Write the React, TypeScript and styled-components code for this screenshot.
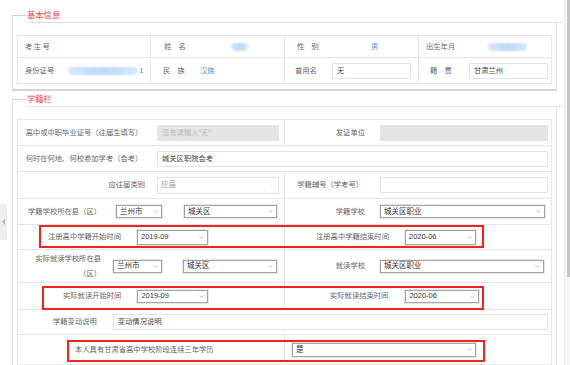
import React from 'react';
import styled, { createGlobalStyle } from 'styled-components';
import { ChevronDown } from 'lucide-react';

const GlobalStyle = createGlobalStyle`
  html, body { margin: 0; padding: 0; background: #fff; }
  body {
    font-family: "Liberation Sans", "Noto Sans CJK SC", sans-serif;
    font-size: 7.3px;
    color: #666;
  }
`;

const Page = styled.div`
  display: flex;
  width: 570px;
  height: 365px;
  overflow: hidden;
  background: #fff;
`;

const Rail = styled.div`
  width: 8px;
  flex: none;
  padding-top: 204px;
  box-sizing: border-box;
`;

const RailTab = styled.div`
  width: 7px;
  height: 36px;
  background: #efefef;
  display: flex;
  align-items: center;
  justify-content: center;
  &::before {
    content: '';
    border-right: 3px solid #b8b8b8;
    border-top: 3px solid transparent;
    border-bottom: 3px solid transparent;
  }
`;

const Main = styled.div`
  flex: 1;
  padding: 15px 0 0 4px;
  box-sizing: border-box;
  overflow: hidden;
`;

const ScrollTrack = styled.div`
  width: 6px;
  flex: none;
  background: #f7f7f7;
  border-left: 1px solid #ececec;
  box-sizing: border-box;
  display: flex;
  justify-content: flex-end;
`;

const ScrollThumb = styled.div`
  width: 3px;
  height: 277px;
  background: #c4c4c4;
`;

const Section = styled.div<{ $top?: number }>`
  margin: ${(p) => p.$top || 0}px 7px 0 0;
  border-left: 1px solid #dcdcdc;
`;

const Head = styled.div`
  display: flex;
  height: 8px;
`;

const Tick = styled.div`
  width: 13px;
  flex: none;
  border-top: 1px solid #cfcfcf;
`;

const LegendBar = styled.div`
  flex: 1;
  margin: 0 -6px 0 1px;
  border-bottom: 1px solid #e3e3e3;
`;

const Legend = styled.div`
  margin-top: -5px;
  font-size: 8.3px;
  line-height: 10px;
  color: #f2454a;
`;

const Body = styled.div`
  border-right: 1px solid #e6e6e6;
  border-bottom: 2px solid #d4d4d4;
  padding: 12px 4px 5px 4px;
`;

const OpenBody = styled.div`
  border-right: 1px solid #e6e6e6;
  padding: 12px 4px 0 4px;
`;

const Table = styled.div`
  border: 1px solid #e6e6e6;
  border-bottom: none;
`;

const Row = styled.div<{ $h: number; $cols?: string }>`
  position: relative;
  display: grid;
  grid-template-columns: ${(p) => p.$cols || '1fr'};
  height: ${(p) => p.$h}px;
  box-sizing: border-box;
  border-bottom: 1px solid #e6e6e6;
`;

const Cell = styled.div<{ $pad?: number; $last?: boolean }>`
  display: flex;
  align-items: center;
  padding-left: ${(p) => p.$pad || 0}px;
  border-right: ${(p) => (p.$last ? 'none' : '1px solid #e6e6e6')};
  white-space: nowrap;
  min-width: 0;
`;

const Label = styled.span<{ $w?: number; $align?: string; $pr?: number }>`
  flex: none;
  width: ${(p) => (p.$w ? `${p.$w}px` : 'auto')};
  text-align: ${(p) => p.$align || 'left'};
  padding-right: ${(p) => p.$pr || 0}px;
  box-sizing: border-box;
  color: #666;
  line-height: 10px;
`;

const WrapLabel = styled(Label)`
  white-space: normal;
  line-height: 15px;
`;

const Value = styled.span<{ $ml?: number }>`
  margin-left: ${(p) => p.$ml || 0}px;
  color: #4a95e8;
  line-height: 10px;
`;

const Blur = styled.span<{ $ml?: number; $w: number }>`
  display: inline-block;
  margin-left: ${(p) => p.$ml || 0}px;
  width: ${(p) => p.$w}px;
  height: 8px;
  border-radius: 4px;
  background: linear-gradient(90deg, #d6e7fb, #bcd8f8 50%, #d6e7fb);
  filter: blur(1.2px);
`;

const Field = styled.div<{ $ml?: number; $w: number; $h?: number; $off?: boolean }>`
  flex: none;
  margin-left: ${(p) => p.$ml || 0}px;
  width: ${(p) => p.$w}px;
  height: ${(p) => p.$h || 16}px;
  box-sizing: border-box;
  border: 1px solid ${(p) => (p.$off ? '#e4e4e4' : '#e3e3e3')};
  background: ${(p) => (p.$off ? '#e4e4e4' : '#fff')};
  color: ${(p) => (p.$off ? '#bdbdbd' : '#444')};
  display: flex;
  align-items: center;
  padding-left: 4px;
  line-height: 10px;
`;

const Select = styled.div<{ $ml?: number; $w: number; $h?: number; $off?: boolean }>`
  flex: none;
  margin-left: ${(p) => p.$ml || 0}px;
  width: ${(p) => p.$w}px;
  height: ${(p) => p.$h || 14}px;
  box-sizing: border-box;
  border: 1px solid ${(p) => (p.$off ? '#e2e2e2' : '#a3a3a3')};
  box-shadow: 0 0 0 1px ${(p) => (p.$off ? 'transparent' : '#e8e8e8')};
  background: #fff;
  color: ${(p) => (p.$off ? '#a0a0a0' : '#333')};
  display: flex;
  align-items: center;
  justify-content: space-between;
  padding: 0 2px 0 3px;
  font-size: 7.5px;
  line-height: 10px;
  svg {
    flex: none;
    color: ${(p) => (p.$off ? '#c8c8c8' : '#808080')};
  }
`;

const RedBox = styled.div<{ $l: number; $t: number; $w: number; $h: number }>`
  position: absolute;
  left: ${(p) => p.$l}px;
  top: ${(p) => p.$t}px;
  width: ${(p) => p.$w}px;
  height: ${(p) => p.$h}px;
  box-sizing: border-box;
  border: 2px solid #f2231e;
  pointer-events: none;
`;

const Drop = ({ text, ml, w, h, off }: { text: string; ml?: number; w: number; h?: number; off?: boolean }) => (
  <Select $ml={ml} $w={w} $h={h} $off={off}>
    <span>{text}</span>
    <ChevronDown size={7} strokeWidth={1.5} />
  </Select>
);

const TOP_COLS = '133px 134px 134px 1fr';
const HALF = '267px 1fr';

export default function App() {
  return (
    <>
      <GlobalStyle />
      <Page>
        <Rail>
          <RailTab />
        </Rail>
        <Main>
          <Section>
            <Head>
              <Tick />
              <LegendBar>
                <Legend>基本信息</Legend>
              </LegendBar>
            </Head>
            <Body>
              <Table>
                <Row $h={22} $cols={TOP_COLS}>
                  <Cell $pad={7}>
                    <Label style={{ letterSpacing: '1.4px' }}>考生号</Label>
                  </Cell>
                  <Cell $pad={13}>
                    <Label>姓　名</Label>
                    <Blur $ml={45} $w={17} />
                  </Cell>
                  <Cell $pad={12}>
                    <Label>性　别</Label>
                    <Value $ml={52}>男</Value>
                  </Cell>
                  <Cell $pad={7} $last>
                    <Label>出生年月</Label>
                    <Blur $ml={33} $w={39} />
                  </Cell>
                </Row>
                <Row $h={26} $cols={TOP_COLS}>
                  <Cell $pad={7}>
                    <Label>身份证号</Label>
                    <Blur $ml={14} $w={70} />
                    <Value $ml={1}>1</Value>
                  </Cell>
                  <Cell $pad={12}>
                    <Label>民　族</Label>
                    <Value $ml={15}>汉族</Value>
                  </Cell>
                  <Cell $pad={10}>
                    <Label>曾用名</Label>
                    <Field $ml={15} $w={79}>无</Field>
                  </Cell>
                  <Cell $pad={11} $last>
                    <Label>籍　贯</Label>
                    <Field $ml={17} $w={79}>甘肃兰州</Field>
                  </Cell>
                </Row>
              </Table>
            </Body>
          </Section>

          <Section $top={8}>
            <Head>
              <Tick />
              <LegendBar>
                <Legend>学籍栏</Legend>
              </LegendBar>
            </Head>
            <OpenBody>
              <Table>
                <Row $h={26} $cols={HALF}>
                  <Cell>
                    <Label $w={132} $align="center">高中或中职毕业证号（往届生填写）</Label>
                    <Field $ml={7} $w={122} $off>没有请输入"无"</Field>
                  </Cell>
                  <Cell $last>
                    <Label $w={90} $align="right" $pr={10}>发证单位</Label>
                    <Field $ml={5} $w={168} $off />
                  </Cell>
                </Row>
                <Row $h={26}>
                  <Cell $last>
                    <Label $w={132} $align="center">何时在何地、何校参加学考（会考）</Label>
                    <Field $ml={7} $w={391}>城关区职院会考</Field>
                  </Cell>
                </Row>
                <Row $h={27} $cols={HALF}>
                  <Cell>
                    <Label $w={132} $align="right" $pr={5}>应往届类别</Label>
                    <Drop ml={7} w={122} h={17} text="应届" off />
                  </Cell>
                  <Cell $last>
                    <Label $w={90} $align="right" $pr={12}>学籍辅号（学考号）</Label>
                    <Field $ml={5} $w={168}></Field>
                  </Cell>
                </Row>
                <Row $h={26} $cols={HALF}>
                  <Cell>
                    <Label $w={93} $align="center">学籍学校所在县（区）</Label>
                    <Drop ml={5} w={46} h={13} text="兰州市" />
                    <Drop ml={22} w={93} h={13} text="城关区" />
                  </Cell>
                  <Cell $last>
                    <Label $w={90} $align="right" $pr={10}>学籍学校</Label>
                    <Drop ml={5} w={165} h={13} text="城关区职业" />
                  </Cell>
                </Row>
                <Row $h={25} $cols={HALF}>
                  <Cell $pad={30}>
                    <Label>注册高中学籍开始时间</Label>
                    <Drop ml={16} w={71} h={15} text="2019-09" />
                  </Cell>
                  <Cell $pad={31} $last>
                    <Label>注册高中学籍结束时间</Label>
                    <Drop ml={16} w={71} h={15} text="2020-06" />
                  </Cell>
                  <RedBox $l={21} $t={0} $w={445} $h={23} />
                </Row>
                <Row $h={33} $cols={HALF}>
                  <Cell $pad={12}>
                    <WrapLabel $w={71} $align="right">实际就读学校所在县（区）</WrapLabel>
                    <Drop ml={12} w={49} h={13} text="兰州市" />
                    <Drop ml={21} w={94} h={13} text="城关区" />
                  </Cell>
                  <Cell $last>
                    <Label $w={90} $align="right" $pr={10}>就读学校</Label>
                    <Drop ml={5} w={164} h={13} text="城关区职业" />
                  </Cell>
                </Row>
                <Row $h={27} $cols={HALF}>
                  <Cell $pad={45}>
                    <Label>实际就读开始时间</Label>
                    <Drop ml={16} w={71} h={13} text="2019-09" />
                  </Cell>
                  <Cell $pad={45} $last>
                    <Label>实际就读结束时间</Label>
                    <Drop ml={17} w={74} h={13} text="2020-06" />
                  </Cell>
                  <RedBox $l={24} $t={3} $w={442} $h={24} />
                </Row>
                <Row $h={25}>
                  <Cell $pad={35} $last>
                    <Label>学籍变动说明</Label>
                    <Field $ml={16} $w={435}>变动情况说明</Field>
                  </Cell>
                </Row>
                <Row $h={30} $cols={HALF}>
                  <Cell $pad={57}>
                    <Label>本人具有甘肃省高中学校阶段连续三年学历</Label>
                  </Cell>
                  <Cell $pad={7} $last>
                    <Drop w={184} h={14} text="是" />
                  </Cell>
                  <RedBox $l={49} $t={5} $w={418} $h={22} />
                </Row>
              </Table>
            </OpenBody>
          </Section>
        </Main>
        <ScrollTrack>
          <ScrollThumb />
        </ScrollTrack>
      </Page>
    </>
  );
}
